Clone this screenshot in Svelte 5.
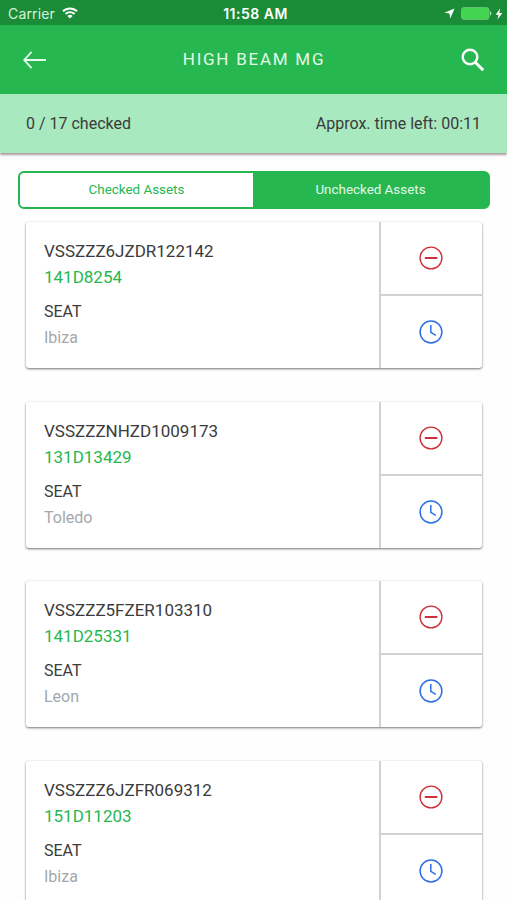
<script>
  let tab = $state('unchecked');

  const assets = [
    { vin: 'VSSZZZ6JZDR122142', reg: '141D8254', make: 'SEAT', model: 'Ibiza' },
    { vin: 'VSSZZZNHZD1009173', reg: '131D13429', make: 'SEAT', model: 'Toledo' },
    { vin: 'VSSZZZ5FZER103310', reg: '141D25331', make: 'SEAT', model: 'Leon' },
    { vin: 'VSSZZZ6JZFR069312', reg: '151D11203', make: 'SEAT', model: 'Ibiza' }
  ];
</script>

<div class="screen">
  <div class="status">
    <div class="carrier">
      <span>Carrier</span>
      <svg width="16" height="12" viewBox="0 0 16 12" fill="none" stroke="#fff" stroke-width="1.9">
        <path d="M1 4.3a10 10 0 0 1 14 0M3.5 7a6.4 6.4 0 0 1 9 0" />
        <path d="M8 11.6 5.4 9a3.7 3.7 0 0 1 5.2 0z" fill="#fff" stroke="none" />
      </svg>
    </div>
    <span class="clock">11:58 AM</span>
    <div class="power">
      <svg width="11" height="11" viewBox="0 0 11 11" fill="#fff">
        <path d="M10.6.4 6.2 10.6 5.5 5.5.3 4.8z" />
      </svg>
      <svg class="battery" width="31" height="13" viewBox="0 0 31 13">
        <rect x=".5" y=".5" width="27.5" height="12" rx="2.5" fill="#43d551" stroke="#62c16f" />
        <path d="M29 4.3c1.8.5 1.8 3.9 0 4.4z" fill="#a5e3ac" />
      </svg>
      <svg class="bolt" width="8" height="12" viewBox="0 0 8 12" fill="#fff">
        <path d="M5 .5.7 6.7h2.8L2.5 11.5 7.3 5H4.4z" />
      </svg>
    </div>
  </div>

  <header>
    <button aria-label="Back">
      <svg width="24" height="18" viewBox="0 0 24 18" fill="none" stroke="#e8faec" stroke-width="1.8">
        <path d="M23 9H1.2M8.6.9 1.2 9l7.4 8.1" />
      </svg>
    </button>
    <h1>HIGH BEAM MG</h1>
    <button aria-label="Search">
      <svg width="24" height="24" viewBox="0 0 24 24" fill="none" stroke="#fff">
        <circle cx="9" cy="9" r="7.3" stroke-width="2.4" />
        <path d="m14.2 14.2 8.1 8.1" stroke-width="3" />
      </svg>
    </button>
  </header>

  <div class="summary">
    <span>0 / 17 checked</span>
    <span>Approx. time left: 00:11</span>
  </div>

  <div class="tabs">
    <button class:active={tab === 'checked'} onclick={() => (tab = 'checked')}>Checked Assets</button>
    <button class:active={tab === 'unchecked'} onclick={() => (tab = 'unchecked')}>Unchecked Assets</button>
  </div>

  <div class="list">
    {#each assets as asset}
      <div class="card">
        <div class="info">
          <p class="vin">{asset.vin}</p>
          <p class="reg">{asset.reg}</p>
          <p class="make">{asset.make}</p>
          <p class="model">{asset.model}</p>
        </div>
        <div class="actions">
          <button aria-label="Remove">
            <svg width="24" height="24" viewBox="0 0 24 24" fill="none" stroke="#cf2f38">
              <circle cx="12" cy="12" r="10.9" stroke-width="1.4" />
              <path d="M5.8 12h12.6" stroke-width="2" />
            </svg>
          </button>
          <button aria-label="Postpone">
            <svg width="24" height="24" viewBox="0 0 24 24" fill="none" stroke="#2c6fe8">
              <circle cx="12" cy="12" r="10.9" stroke-width="1.5" />
              <path d="M11.8 5v7.3l5 3.1" stroke-width="1.5" />
            </svg>
          </button>
        </div>
      </div>
    {/each}
  </div>
</div>

<style>
  :global(body) {
    background: #fefefe;
  }

  .screen {
    height: 900px;
    overflow: hidden;
    font-family: Roboto, sans-serif;
    color: #3b3b3b;
  }

  button {
    display: flex;
    align-items: center;
    justify-content: center;
    padding: 0;
    border: none;
    background: none;
    font-family: inherit;
  }

  svg {
    display: block;
  }

  .status {
    display: grid;
    grid-template-columns: 1fr auto 1fr;
    align-items: center;
    height: 25px;
    padding: 2px 4px 0 8px;
    box-sizing: border-box;
    background: #1a8c38;
    color: #fff;
    font-family: Inter, sans-serif;
    font-size: 14px;
  }

  .carrier {
    display: flex;
    align-items: center;
    gap: 7px;
    color: #d6f3dc;
    letter-spacing: 0.15px;
  }

  .carrier svg {
    margin-top: -2px;
  }

  .clock {
    font-weight: 600;
    font-size: 14px;
    letter-spacing: 0.5px;
  }

  .power {
    display: flex;
    align-items: center;
    justify-content: flex-end;
  }

  .battery {
    margin: 0 3px 0 6px;
  }

  header {
    display: flex;
    align-items: center;
    justify-content: space-between;
    height: 69px;
    padding: 0 22px 0 23px;
    box-sizing: border-box;
    background: #26b750;
  }

  h1 {
    margin: 0;
    padding-bottom: 2px;
    color: #e3f8e8;
    font-size: 17px;
    font-weight: 400;
    letter-spacing: 1.75px;
  }

  .summary {
    display: flex;
    align-items: center;
    justify-content: space-between;
    height: 59px;
    padding: 0 26px;
    box-sizing: border-box;
    background: #a9e9c0;
    box-shadow: 0 2px 2px rgba(70, 40, 45, 0.45);
    font-size: 16px;
  }

  .tabs {
    display: flex;
    height: 38px;
    margin: 18px 17px 0 18px;
    box-sizing: border-box;
    border: 2px solid #26b750;
    border-radius: 6px;
    background: #26b750;
    overflow: hidden;
  }

  .tabs button {
    width: 233px;
    padding-bottom: 2px;
    background: #fff;
    color: #26b750;
    font-size: 13.4px;
  }

  .tabs .active {
    flex: 1;
    background: #26b750;
    color: #e3f8e8;
  }

  .list {
    display: flex;
    flex-direction: column;
    gap: 33.6px;
    padding: 13px 25px 0 26px;
  }

  .card {
    display: flex;
    flex-shrink: 0;
    height: 146px;
    border-radius: 3px;
    background: #fff;
    box-shadow: 0 1px 3px rgba(0, 0, 0, 0.25), 0 1px 2px rgba(0, 0, 0, 0.35);
  }

  .info {
    flex: 1;
    padding: 16px 18px 0;
  }

  p {
    margin: 0;
    font-size: 16px;
    line-height: 26px;
  }

  .vin {
    font-size: 17px;
  }

  .reg {
    color: #26b750;
    font-size: 17px;
  }

  .make {
    margin-top: 9px;
  }

  .model {
    color: #a3a7ab;
  }

  .actions {
    display: flex;
    flex-direction: column;
    width: 103px;
    box-sizing: border-box;
    border-left: 2px solid #d2d2d2;
  }

  .actions button {
    flex: 1;
    padding-right: 2px;
  }

  .actions button + button {
    border-top: 2px solid #d2d2d2;
  }
</style>
